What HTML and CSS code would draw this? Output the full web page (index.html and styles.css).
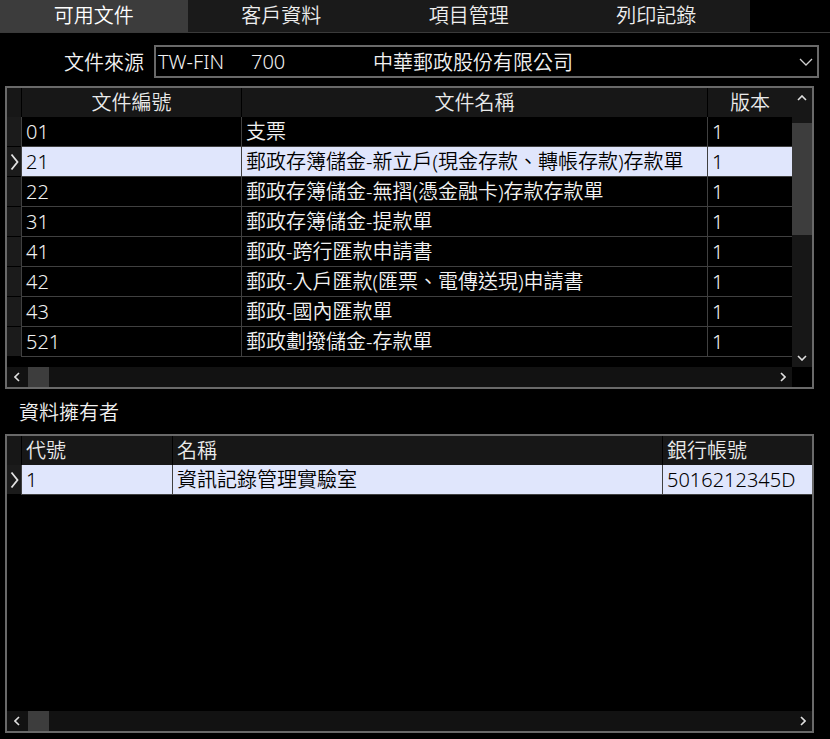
FILE: index.html
```html
<!DOCTYPE html>
<html lang="zh-Hant">
<head>
    <meta charset="UTF-8">
    <title>文件選擇</title>
    <link rel="stylesheet" href="styles.css">
</head>
<body>
    <div class="tabs">
        <div class="tab active">可用文件</div>
        <div class="tab">客戶資料</div>
        <div class="tab">項目管理</div>
        <div class="tab">列印記錄</div>
    </div>

    <div class="source-row">
        <span class="source-label">文件來源</span>
        <div class="combo">
            <span class="combo-code">TW-FIN</span>
            <span class="combo-num">700</span>
            <span class="combo-name">中華郵政股份有限公司</span>
            <svg class="combo-arrow" width="14" height="8" viewBox="0 0 14 8"><path d="M1 1l6 6 6-6" fill="none" stroke="#cfcfcf" stroke-width="1.3"/></svg>
        </div>
    </div>

    <!-- document list -->
    <div class="grid grid-files">
        <div class="grid-main">
            <div class="grid-body">
                <div class="grid-row grid-head">
                    <div class="rh"></div>
                    <div class="cell">文件編號</div>
                    <div class="cell">文件名稱</div>
                    <div class="cell">版本</div>
                </div>
                <div class="grid-row">
                    <div class="rh"></div>
                    <div class="cell">01</div>
                    <div class="cell">支票</div>
                    <div class="cell">1</div>
                </div>
                <div class="grid-row selected">
                    <div class="rh"><svg width="9" height="18" viewBox="0 0 9 18"><path d="M1.5 1.5l6 7.5-6 7.5" fill="none" stroke="#e2e2e2" stroke-width="1.8"/></svg></div>
                    <div class="cell">21</div>
                    <div class="cell">郵政存簿儲金-新立戶(現金存款、轉帳存款)存款單</div>
                    <div class="cell">1</div>
                </div>
                <div class="grid-row">
                    <div class="rh"></div>
                    <div class="cell">22</div>
                    <div class="cell">郵政存簿儲金-無摺(憑金融卡)存款存款單</div>
                    <div class="cell">1</div>
                </div>
                <div class="grid-row">
                    <div class="rh"></div>
                    <div class="cell">31</div>
                    <div class="cell">郵政存簿儲金-提款單</div>
                    <div class="cell">1</div>
                </div>
                <div class="grid-row">
                    <div class="rh"></div>
                    <div class="cell">41</div>
                    <div class="cell">郵政-跨行匯款申請書</div>
                    <div class="cell">1</div>
                </div>
                <div class="grid-row">
                    <div class="rh"></div>
                    <div class="cell">42</div>
                    <div class="cell">郵政-入戶匯款(匯票、電傳送現)申請書</div>
                    <div class="cell">1</div>
                </div>
                <div class="grid-row">
                    <div class="rh"></div>
                    <div class="cell">43</div>
                    <div class="cell">郵政-國內匯款單</div>
                    <div class="cell">1</div>
                </div>
                <div class="grid-row">
                    <div class="rh"></div>
                    <div class="cell">521</div>
                    <div class="cell">郵政劃撥儲金-存款單</div>
                    <div class="cell">1</div>
                </div>
            </div>
            <div class="vscroll">
                <div class="sb-btn"><svg width="10" height="6" viewBox="0 0 10 6"><path d="M1 5l4-4 4 4" fill="none" stroke="#e0e0e0" stroke-width="1.6"/></svg></div>
                <div class="vthumb"></div>
                <div class="sb-fill"></div>
                <div class="sb-btn"><svg width="10" height="6" viewBox="0 0 10 6"><path d="M1 1l4 4 4-4" fill="none" stroke="#e0e0e0" stroke-width="1.6"/></svg></div>
            </div>
        </div>
        <div class="hscroll-row">
            <div class="hscroll">
                <div class="sb-btn side"><svg width="6" height="10" viewBox="0 0 6 10"><path d="M5 1l-4 4 4 4" fill="none" stroke="#e0e0e0" stroke-width="1.6"/></svg></div>
                <div class="hthumb"></div>
                <div class="sb-fill"></div>
                <div class="sb-btn side"><svg width="6" height="10" viewBox="0 0 6 10"><path d="M1 1l4 4-4 4" fill="none" stroke="#e0e0e0" stroke-width="1.6"/></svg></div>
            </div>
            <div class="corner"></div>
        </div>
    </div>

    <div class="section-label">資料擁有者</div>

    <!-- owner list -->
    <div class="grid grid-owners">
        <div class="grid-main">
            <div class="grid-body">
                <div class="grid-row grid-head">
                    <div class="rh"></div>
                    <div class="cell">代號</div>
                    <div class="cell">名稱</div>
                    <div class="cell">銀行帳號</div>
                </div>
                <div class="grid-row selected">
                    <div class="rh"><svg width="9" height="18" viewBox="0 0 9 18"><path d="M1.5 1.5l6 7.5-6 7.5" fill="none" stroke="#e2e2e2" stroke-width="1.8"/></svg></div>
                    <div class="cell">1</div>
                    <div class="cell">資訊記錄管理實驗室</div>
                    <div class="cell">5016212345D</div>
                </div>
            </div>
        </div>
        <div class="hscroll-row">
            <div class="hscroll">
                <div class="sb-btn side"><svg width="6" height="10" viewBox="0 0 6 10"><path d="M5 1l-4 4 4 4" fill="none" stroke="#e0e0e0" stroke-width="1.6"/></svg></div>
                <div class="hthumb"></div>
                <div class="sb-fill"></div>
                <div class="sb-btn side"><svg width="6" height="10" viewBox="0 0 6 10"><path d="M1 1l4 4-4 4" fill="none" stroke="#e0e0e0" stroke-width="1.6"/></svg></div>
            </div>
        </div>
    </div>
</body>
</html>
```

FILE: styles.css
```css
* {
    box-sizing: border-box;
}

body {
    margin: 0;
    width: 830px;
    height: 739px;
    overflow: hidden;
    background-color: #000;
    color: #f2f2f2;
    font-family: "Noto Sans", "Noto Sans CJK TC", sans-serif;
    font-size: 20px;
    font-weight: 350;
}

/* tab strip */
.tabs {
    display: flex;
    height: 33px;
    border-bottom: 1px solid #3a3a3a;
}

.tab {
    flex: 0 0 187.5px;
    background-color: #1a1a1a;
    text-align: center;
    line-height: 32px;
    color: #eee;
}

.tab.active {
    background-color: #3c3c3c;
    color: #fff;
}

/* document source picker */
.source-row {
    display: flex;
    align-items: center;
    margin-top: 12px;
    height: 33px;
}

.source-label {
    width: 144px;
    margin-right: 10px;
    text-align: right;
}

.combo {
    display: flex;
    align-items: center;
    width: 665px;
    height: 33px;
    border: 2px solid #696969;
    padding-left: 2px;
    white-space: nowrap;
}

.combo-code {
    width: 93px;
}

.combo-num {
    width: 122px;
}

.combo-arrow {
    margin-left: auto;
    margin-right: 4px;
}

/* data grids */
.grid {
    display: flex;
    flex-direction: column;
    width: 809px;
    margin-left: 5px;
    border: 2px solid #696969;
}

.grid-files {
    height: 303px;
    margin-top: 8px;
}

.grid-owners {
    height: 299px;
}

.grid-main {
    display: flex;
    flex: 1;
    min-height: 0;
}

.grid-body {
    flex: 1;
}

.grid-row {
    display: grid;
    height: 30px;
    line-height: 29px;
    white-space: nowrap;
}

.grid-files .grid-row {
    grid-template-columns: 14px 220px 466px 85px;
}

.grid-owners .grid-row {
    grid-template-columns: 14px 151px 490px 150px;
}

.grid-row .cell {
    padding-left: 4px;
    border-left: 1px solid #404040;
    border-bottom: 1px solid #404040;
    overflow: hidden;
}

.grid-row .rh {
    display: flex;
    align-items: center;
    justify-content: center;
    background-color: #1b1b1b;
    border-bottom: 1px solid #000;
}

.grid-head {
    height: 29px;
    background-color: #171717;
}

.grid-head .cell {
    border-left-color: #000;
    border-bottom: none;
    color: #eaeaea;
}

.grid-head .rh {
    border-bottom: none;
    background-color: #171717;
}

.grid-files .grid-head .cell {
    text-align: center;
    padding-left: 0;
}

.grid-row.selected .cell {
    background-color: #e0e6fc;
    color: #000;
}

/* scrollbars */
.vscroll {
    display: flex;
    flex-direction: column;
    width: 20px;
    background-color: #171717;
}

.sb-btn {
    display: flex;
    align-items: center;
    justify-content: center;
    height: 19px;
    flex: 0 0 19px;
}

.sb-btn.side {
    height: 20px;
}

.vthumb {
    height: 112px;
    margin-top: 16px;
    background-color: #3d3d3d;
}

.sb-fill {
    flex: 1;
}

.hscroll-row {
    display: flex;
    height: 20px;
}

.hscroll {
    display: flex;
    flex: 1;
    background-color: #121212;
}

.hthumb {
    width: 21px;
    margin-left: 2px;
    background-color: #3d3d3d;
}

.corner {
    width: 20px;
}

.section-label {
    padding-left: 19px;
    margin-top: 9px;
    margin-bottom: 6px;
    line-height: 30px;
}
```
